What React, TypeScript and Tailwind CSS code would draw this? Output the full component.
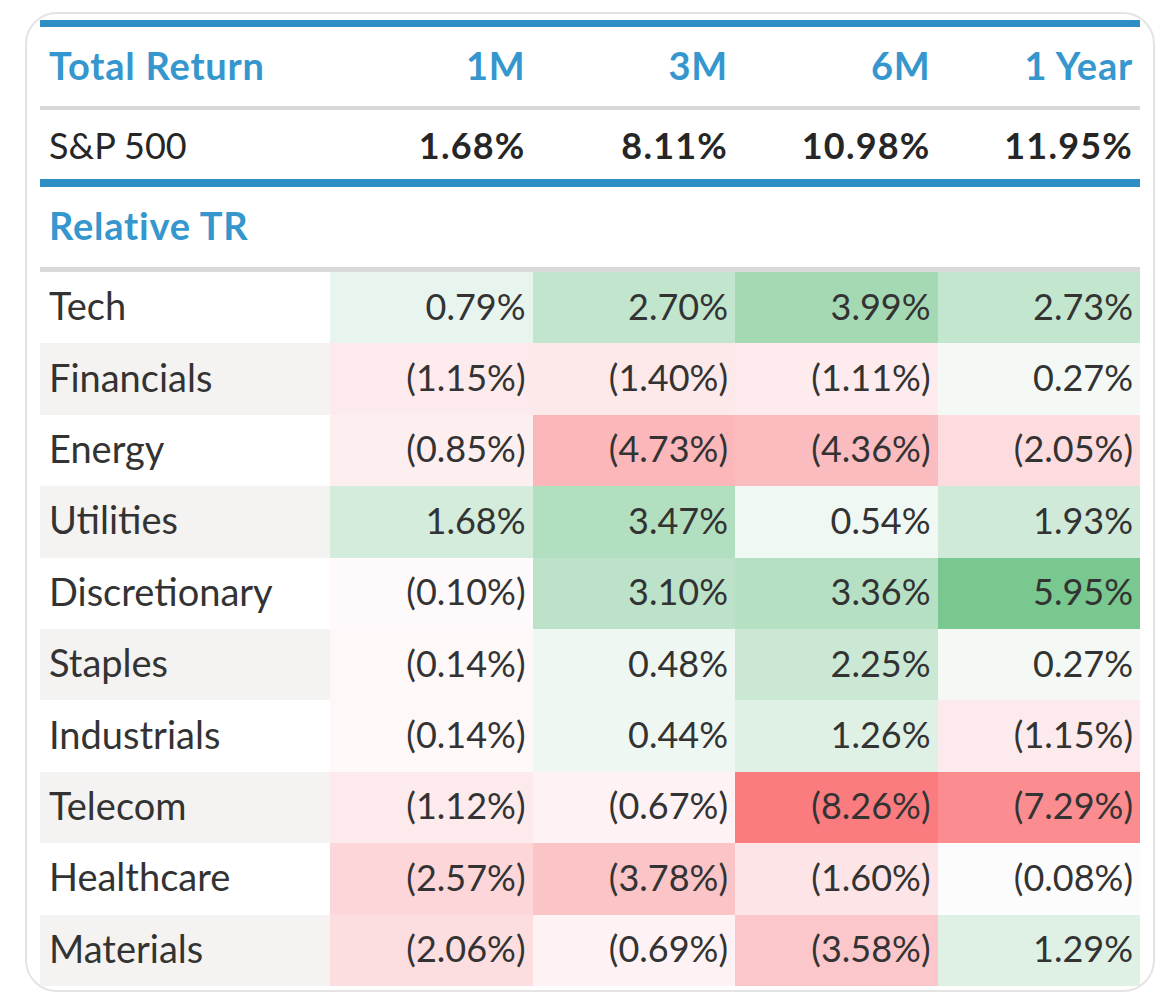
const periods = ["1M", "3M", "6M", "1 Year"];

const spx = ["1.68%", "8.11%", "10.98%", "11.95%"];

// [label, [value, background] x4]
const rows: [string, [string, string][]][] = [
  ["Tech", [["0.79%", "#e8f4ee"], ["2.70%", "#c2e5cd"], ["3.99%", "#a5d9b3"], ["2.73%", "#c3e6ce"]]],
  ["Financials", [["(1.15%)", "#fdeaec"], ["(1.40%)", "#fde8ea"], ["(1.11%)", "#fdebed"], ["0.27%", "#f4f9f6"]]],
  ["Energy", [["(0.85%)", "#fdeef0"], ["(4.73%)", "#fbb7ba"], ["(4.36%)", "#fbbcbf"], ["(2.05%)", "#fcdcdf"]]],
  ["Utilities", [["1.68%", "#d3ecdb"], ["3.47%", "#b3dfc1"], ["0.54%", "#f0f8f3"], ["1.93%", "#d0eada"]]],
  ["Discretionary", [["(0.10%)", "#fefafb"], ["3.10%", "#bce3c9"], ["3.36%", "#b6e0c3"], ["5.95%", "#78c890"]]],
  ["Staples", [["(0.14%)", "#fef8f9"], ["0.48%", "#eff7f2"], ["2.25%", "#cbe8d4"], ["0.27%", "#f4f9f6"]]],
  ["Industrials", [["(0.14%)", "#fef8f9"], ["0.44%", "#eff7f2"], ["1.26%", "#dff0e5"], ["(1.15%)", "#fdeaec"]]],
  ["Telecom", [["(1.12%)", "#fdeaec"], ["(0.67%)", "#fef2f4"], ["(8.26%)", "#fb7c7f"], ["(7.29%)", "#fb8c8f"]]],
  ["Healthcare", [["(2.57%)", "#fcd6d9"], ["(3.78%)", "#fbc4c7"], ["(1.60%)", "#fde5e7"], ["(0.08%)", "#fdfcfd"]]],
  ["Materials", [["(2.06%)", "#fcdde0"], ["(0.69%)", "#fef2f4"], ["(3.58%)", "#fbc7ca"], ["1.29%", "#dff0e5"]]],
];

export default function App() {
  return (
    <div className="w-[1172px] h-[1006px] bg-white pt-[12px] pl-[25px] font-['Lato',sans-serif]">
      <div className="w-[1130px] h-[980px] rounded-[32px] border-2 border-[#e4e4e4] px-[13px] pt-[6px]">
        <div className="h-[7px] bg-[#2f8fc4]" />

        {/* header */}
        <div className="grid grid-cols-[290px_repeat(4,1fr)] h-[79px] items-center pb-[3px] text-[38px] font-bold tracking-[0.8px] text-[#3597cd]">
          <div className="pl-[9px]">Total Return</div>
          {periods.map((p) => (
            <div key={p} className="text-right pr-[7px]">{p}</div>
          ))}
        </div>
        <div className="h-[4px] bg-[#d9d9d9]" />

        {/* S&P 500 */}
        <div className="grid grid-cols-[290px_repeat(4,1fr)] h-[69px] items-center text-[36px] text-[#262626]">
          <div className="pl-[9px]">S&amp;P 500</div>
          {spx.map((v) => (
            <div key={v} className="text-right pr-[7px] font-bold tracking-[1.2px]">{v}</div>
          ))}
        </div>
        <div className="h-[8px] bg-[#2f8fc4]" />

        <div className="h-[80px] flex items-center pb-[3px] pl-[9px] text-[38px] font-bold tracking-[0.8px] text-[#3597cd]">
          Relative TR
        </div>
        <div className="h-[5px] bg-[#d9d9d9]" />

        {/* sectors */}
        {rows.map(([label, cells], i) => (
          <div key={label} className="grid grid-cols-[290px_repeat(4,1fr)] h-[71.4px] text-[36px] text-[#333333]">
            <div className={`flex items-center pl-[9px] pb-[4px] text-[38px] ${i % 2 === 1 ? "bg-[#f4f3f2]" : "bg-white"}`}>{label}</div>
            {cells.map(([v, bg], j) => (
              <div key={j} className="flex items-center justify-end pr-[7px] pb-[4px]" style={{ backgroundColor: bg }}>
                {v}
              </div>
            ))}
          </div>
        ))}
      </div>
    </div>
  );
}
